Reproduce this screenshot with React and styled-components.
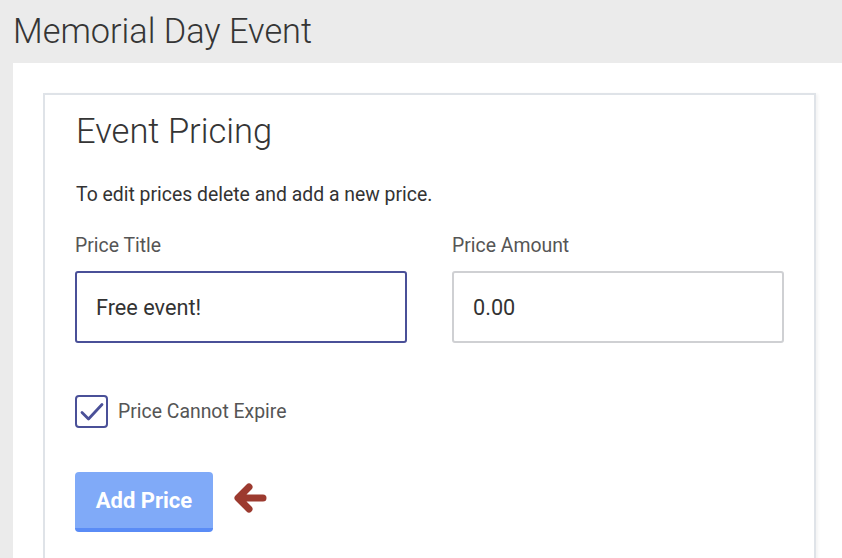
import styled, { createGlobalStyle } from 'styled-components';
import { useEffect, useRef, useState } from 'react';

const GlobalStyle = createGlobalStyle`
  html, body {
    margin: 0;
    padding: 0;
    background: #ebebeb;
    font-family: Roboto, 'Liberation Sans', sans-serif;
    overflow: hidden;
  }
`;

export default function App() {
  const [title, setTitle] = useState('Free event!');
  const [amount, setAmount] = useState('0.00');
  const [noExpire, setNoExpire] = useState(true);
  const titleRef = useRef(null);

  // keep the caret at the end of the title, like someone just typed it
  useEffect(() => {
    const el = titleRef.current;
    if (el) {
      el.focus();
      el.setSelectionRange(el.value.length, el.value.length);
    }
  }, []);

  return (
    <>
      <GlobalStyle />
      <Page>
        <Header>
          <h1>Memorial Day Event</h1>
        </Header>
        <Panel>
          <Card>
            <CardTitle>Event Pricing</CardTitle>
            <Hint>To edit prices delete and add a new price.</Hint>
            <Fields>
              <Field>
                <Label>Price Title</Label>
                <Input ref={titleRef} focused value={title} onChange={e => setTitle(e.target.value)} />
              </Field>
              <Field>
                <Label>Price Amount</Label>
                <Input value={amount} onChange={e => setAmount(e.target.value)} />
              </Field>
            </Fields>
            <CheckRow onClick={() => setNoExpire(!noExpire)}>
              <Box>
                {noExpire && (
                  <svg width="26" height="22" viewBox="0 0 26 22">
                    <path d="M3 11.5 L9.5 18 L23 3.5" fill="none" stroke="#4a5098" strokeWidth="2.8" strokeLinecap="round" strokeLinejoin="round" />
                  </svg>
                )}
              </Box>
              <span>Price Cannot Expire</span>
            </CheckRow>
            <Actions>
              <AddButton>Add Price</AddButton>
              <svg width="36" height="36" viewBox="0 0 36 36">
                <path d="M31 18 H8 M17 7 L6 18 L17 29" fill="none" stroke="#9c3a2f" strokeWidth="7" strokeLinecap="round" strokeLinejoin="round" />
              </svg>
            </Actions>
          </Card>
        </Panel>
      </Page>
    </>
  );
}

const Page = styled.div`
  width: 842px;
  height: 558px;
  display: flex;
  flex-direction: column;
  overflow: hidden;
`
const Header = styled.div`
  height: 63px;
  flex-shrink: 0;
  box-sizing: border-box;
  padding-left: 13px;
  padding-bottom: 2px;
  display: flex;
  align-items: center;
  h1{
    margin: 0;
    font-weight: 300;
    font-size: 34.3px;
    color: #353535;
  }
`
const Panel = styled.div`
  flex-shrink: 0;
  margin-left: 13px;
  background-color: #ffffff;
  padding: 30px 0 0 30px;
  box-sizing: border-box;
`
const Card = styled.div`
  width: 773px;
  height: 500px;
  box-sizing: border-box;
  border: 2px solid #dfe3e8;
  box-shadow: 2px 1px 3px rgba(0,0,0,0.05);
  padding: 16px 30px 0 30px;
`
const CardTitle = styled.h2`
  margin: 0 0 0 1px;
  font-weight: 300;
  font-size: 34.5px;
  line-height: 40px;
  color: #353535;
`
const Hint = styled.p`
  margin: 32px 0 0 1px;
  font-size: 19.4px;
  line-height: 24px;
  color: #333333;
`
const Fields = styled.div`
  margin-top: 27px;
  display: grid;
  grid-template-columns: 332px 332px;
  column-gap: 45px;
`
const Field = styled.div`
  display: flex;
  flex-direction: column;
`
const Label = styled.label`
  font-size: 19.4px;
  line-height: 24px;
  color: #555555;
  margin-bottom: 13px;
`
const Input = styled.input`
  height: 72px;
  box-sizing: border-box;
  border: 2px solid ${p => p.focused ? '#4a5098' : '#cfd0d3'};
  border-radius: 3px;
  padding: 0 19px;
  font-family: Roboto, 'Liberation Sans', sans-serif;
  font-size: 21.7px;
  color: #333333;
  outline: none;
  caret-color: #333;
`
const CheckRow = styled.div`
  margin-top: 52px;
  display: flex;
  align-items: center;
  gap: 10px;
  cursor: pointer;
  span{
    font-size: 19.4px;
    color: #555555;
  }
`
const Box = styled.div`
  width: 33px;
  height: 33px;
  box-sizing: border-box;
  border: 2px solid #4a5098;
  border-radius: 4px;
  display: flex;
  align-items: center;
  justify-content: center;
`
const Actions = styled.div`
  margin-top: 44px;
  display: flex;
  align-items: center;
  gap: 19px;
  svg{
    margin-top: -8px;
  }
`
const AddButton = styled.button`
  width: 138px;
  height: 60px;
  border: none;
  border-bottom: 4px solid #5a8cf6;
  border-radius: 4px;
  background-color: #80aaf8;
  color: #ffffff;
  font-family: Roboto, 'Liberation Sans', sans-serif;
  font-weight: 700;
  font-size: 22px;
  cursor: pointer;
`
